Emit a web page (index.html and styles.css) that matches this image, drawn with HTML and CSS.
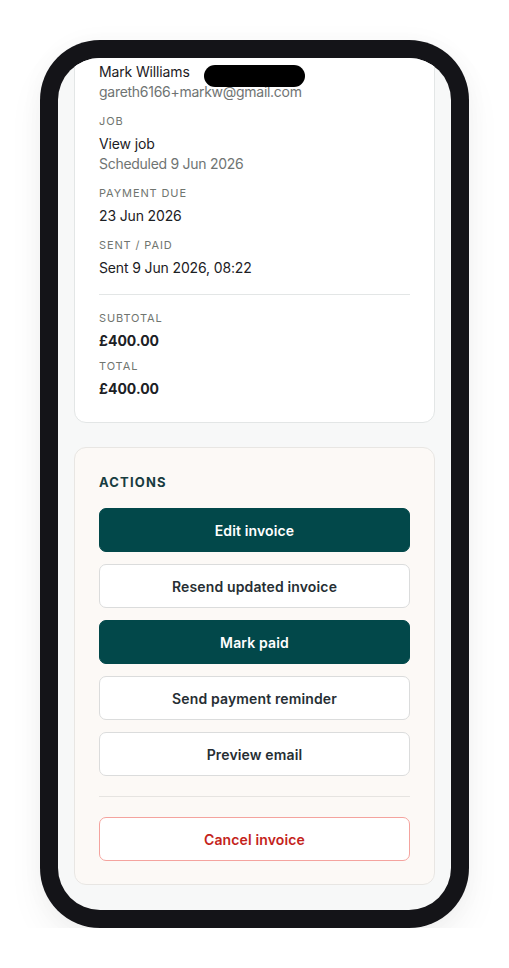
FILE: index.html
```html
<!DOCTYPE html>
<html lang="en">
<head>
<meta charset="utf-8">
<title>Invoice</title>
<link rel="stylesheet" href="styles.css">
</head>
<body>
<div class="phone">
  <div class="screen">
    <div class="scroll">
      <section class="card details">
        <div class="field">
          <div class="value">Mark Williams</div>
          <div class="sub">gareth6166+markw@gmail.com</div>
        </div>
        <div class="field">
          <div class="label">Job</div>
          <div class="value">View job</div>
          <div class="sub">Scheduled 9 Jun 2026</div>
        </div>
        <div class="field">
          <div class="label">Payment due</div>
          <div class="value">23 Jun 2026</div>
        </div>
        <div class="field">
          <div class="label">Sent / paid</div>
          <div class="value">Sent 9 Jun 2026, 08:22</div>
        </div>
        <hr class="divider">
        <div class="totals">
          <div class="field">
            <div class="label">Subtotal</div>
            <div class="value strong">£400.00</div>
          </div>
          <div class="field">
            <div class="label">Total</div>
            <div class="value strong">£400.00</div>
          </div>
        </div>
      </section>
      <section class="card actions">
        <h2 class="actions-title">Actions</h2>
        <div class="btn-list">
          <button class="btn primary">Edit invoice</button>
          <button class="btn secondary">Resend updated invoice</button>
          <button class="btn primary">Mark paid</button>
          <button class="btn secondary">Send payment reminder</button>
          <button class="btn secondary">Preview email</button>
        </div>
        <hr class="divider action-divider">
        <button class="btn danger">Cancel invoice</button>
      </section>
    </div>
    <div class="island"></div>
  </div>
</div>
</body>
</html>
```
FILE: styles.css
```css
* { box-sizing: border-box; }
html, body { margin: 0; padding: 0; background: #ffffff; }
body {
  font-family: Inter, "Liberation Sans", Arial, sans-serif;
  color: #1c2024;
  padding: 40px 0 0 40px;
}
.phone {
  width: 429px;
  height: 888px;
  background: #141418;
  border-radius: 60px;
  padding: 18px;
  box-shadow: 0 18px 36px rgba(0, 0, 0, 0.05), 0 0 24px rgba(0, 0, 0, 0.03);
}
.screen {
  position: relative;
  width: 393px;
  height: 852px;
  border-radius: 42px;
  overflow: hidden;
  background: #f7f8f8;
}
.island {
  position: absolute;
  left: 146px;
  top: 7px;
  width: 101px;
  height: 22px;
  border-radius: 11px;
  background: #000;
}
.scroll {
  margin-top: -21px;
  padding: 0 16px;
  display: flex;
  flex-direction: column;
  gap: 24px;
}
.card {
  border: 1px solid #e3e6e6;
  border-radius: 12px;
  background: #ffffff;
  padding: 24px 24px 23px;
}
.details {
  display: flex;
  flex-direction: column;
  gap: 11px;
}
.field { display: flex; flex-direction: column; }
.label {
  font-size: 11px;
  line-height: 16px;
  text-transform: uppercase;
  letter-spacing: 0.08em;
  color: #70756f;
  margin-bottom: 5px;
}
.value {
  font-size: 14px;
  line-height: 20px;
  letter-spacing: -0.01em;
  color: #1c2024;
}
.sub {
  font-size: 14px;
  line-height: 20px;
  letter-spacing: -0.02em;
  color: #6f7473;
}
.strong { font-weight: 700; letter-spacing: 0; }
.divider {
  border: 0;
  border-top: 1px solid #e3e6e6;
  margin: 5px 0 4px;
}
.totals {
  display: flex;
  flex-direction: column;
  gap: 7px;
}
.actions {
  background: #fcf9f6;
  border-color: #e8e6e3;
  display: flex;
  flex-direction: column;
}
.actions-title {
  margin: 0 0 16px;
  font-size: 13px;
  line-height: 20px;
  font-weight: 700;
  letter-spacing: 0.09em;
  text-transform: uppercase;
  color: #173c3f;
}
.btn-list {
  display: flex;
  flex-direction: column;
  gap: 12px;
}
.btn {
  height: 44px;
  width: 100%;
  border-radius: 7px;
  font-family: inherit;
  font-size: 14px;
  font-weight: 600;
  letter-spacing: 0.01em;
  display: flex;
  align-items: center;
  justify-content: center;
  cursor: pointer;
}
.primary {
  background: #02484a;
  color: #ffffff;
  border: 1px solid #02484a;
}
.secondary {
  background: #ffffff;
  color: #262e33;
  border: 1px solid #dbdcdc;
}
.danger {
  background: #ffffff;
  color: #c4231b;
  border: 1px solid #f4a39e;
}
.action-divider {
  margin: 20px 0 20px;
  border-top-color: #e6e4e1;
}
```
